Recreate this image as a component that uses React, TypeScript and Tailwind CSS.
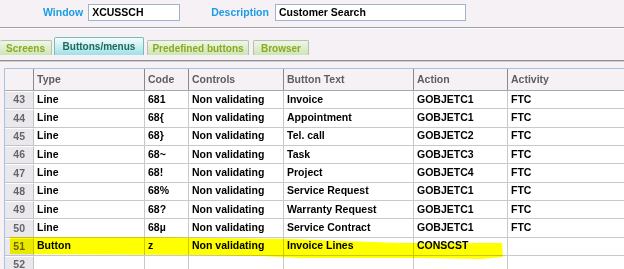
import React from 'react';

type Row = { n: number; type: string; code: string; controls: string; text: string; action: string; activity: string };

const rows: Row[] = [
  { n: 43, type: 'Line', code: '681', controls: 'Non validating', text: 'Invoice', action: 'GOBJETC1', activity: 'FTC' },
  { n: 44, type: 'Line', code: '68{', controls: 'Non validating', text: 'Appointment', action: 'GOBJETC1', activity: 'FTC' },
  { n: 45, type: 'Line', code: '68}', controls: 'Non validating', text: 'Tel. call', action: 'GOBJETC2', activity: 'FTC' },
  { n: 46, type: 'Line', code: '68~', controls: 'Non validating', text: 'Task', action: 'GOBJETC3', activity: 'FTC' },
  { n: 47, type: 'Line', code: '68!', controls: 'Non validating', text: 'Project', action: 'GOBJETC4', activity: 'FTC' },
  { n: 48, type: 'Line', code: '68%', controls: 'Non validating', text: 'Service Request', action: 'GOBJETC1', activity: 'FTC' },
  { n: 49, type: 'Line', code: '68?', controls: 'Non validating', text: 'Warranty Request', action: 'GOBJETC1', activity: 'FTC' },
  { n: 50, type: 'Line', code: '68µ', controls: 'Non validating', text: 'Service Contract', action: 'GOBJETC1', activity: 'FTC' },
  { n: 51, type: 'Button', code: 'z', controls: 'Non validating', text: 'Invoice Lines', action: 'CONSCST', activity: '' },
  { n: 52, type: '', code: '', controls: '', text: '', action: '', activity: '' },
];

const cols = 'grid grid-cols-[29px_111px_44px_95px_130px_94px_1fr]';

const Tab = ({ label, active, width }: { label: string; active?: boolean; width: string }) => (
  <div
    className={
      active
        ? `${width} h-[18px] flex items-center justify-center border border-b-0 border-[#79bcb0] rounded-t-[2px] bg-gradient-to-b from-[#f4fcfd] to-[#9fdfe9] text-[#1e6a5c]`
        : `${width} h-[15px] flex items-center justify-center border border-b-0 border-[#b9bdb5] rounded-t-[2px] bg-gradient-to-b from-[#eef7e6] to-[#cde5b5] text-[#8ea822]`
    }
  >
    {label}
  </div>
);

export default function App() {
  return (
    <div className="relative w-[624px] h-[269px] overflow-hidden bg-[#f5f1f5] font-['Liberation_Sans',Arial,sans-serif] text-[10.5px] font-bold text-black">
      {/* header fields */}
      <div className="flex items-center h-[27px] pb-[2px]">
        <span className="ml-[43px] text-[#1c9be4]">Window</span>
        <div className="ml-[5px] w-[92px] h-[17px] bg-white border border-[#9fb4cc] flex items-center pl-[3px]">XCUSSCH</div>
        <span className="ml-[31px] text-[#1c9be4]">Description</span>
        <div className="ml-[6px] w-[191px] h-[17px] bg-white border border-[#9fb4cc] flex items-center pl-[3px]">Customer Search</div>
      </div>
      <div className="h-[2px] border-t border-[#a3a0a3] border-b border-b-[#fbfafb]" />

      {/* tabs */}
      <div className="flex items-end h-[26px] gap-[2px] text-[10px]">
        <Tab label="Screens" width="w-[52px] border-l-0" />
        <Tab label="Buttons/menus" width="w-[90px]" active />
        <Tab label="Predefined buttons" width="w-[102px] ml-[1px]" />
        <Tab label="Browser" width="w-[56px] ml-[2px]" />
      </div>
      <div className="mt-[5px] h-[2px] border-t border-[#8e8c8e] border-b border-b-[#d0ced0]" />

      {/* table */}
      <div className="mt-[6px] ml-[4px] border-l border-t border-[#a9c3de]">
        <div className={`${cols} h-[22px] border-b border-[#a8a8a8] text-[#5e5e5e]`}>
          <div className="border-r border-[#8a8a8a]" />
          <div className="border-r border-[#8a8a8a] pl-[3px] flex items-center">Type</div>
          <div className="border-r border-[#8a8a8a] pl-[3px] flex items-center">Code</div>
          <div className="border-r border-[#8a8a8a] pl-[3px] flex items-center">Controls</div>
          <div className="border-r border-[#8a8a8a] pl-[3px] flex items-center">Button Text</div>
          <div className="border-r border-[#8a8a8a] pl-[3px] flex items-center">Action</div>
          <div className="pl-[3px] flex items-center">Activity</div>
        </div>
        {rows.map((r) => (
          <div key={r.n} className={`${cols} h-[18.33px] bg-white`}>
            <div className="bg-[#ebe8ed] border-r border-b border-[#c4c2c6] border-t border-t-white flex items-center justify-end pr-[8px] text-[#666]">
              {r.n}
            </div>
            <div className="border-r border-b border-[#c9c9c9] pl-[3px] flex items-center">{r.type}</div>
            <div className="border-r border-b border-[#c9c9c9] pl-[3px] flex items-center">{r.code}</div>
            <div className="border-r border-b border-[#c9c9c9] pl-[3px] flex items-center">{r.controls}</div>
            <div className="border-r border-b border-[#c9c9c9] pl-[3px] flex items-center">{r.text}</div>
            <div className="border-r border-b border-[#c9c9c9] pl-[3px] flex items-center">{r.action}</div>
            <div className="border-b border-[#c9c9c9] pl-[3px] flex items-center">{r.activity}</div>
          </div>
        ))}
      </div>

      {/* highlighter stroke over row 51 */}
      <svg className="absolute inset-0 pointer-events-none mix-blend-multiply" width="624" height="269">
        <polygon
          fill="#ffff00"
          points="10,237 150,237 290,239 400,243 502,243 503,257 480,259 420,258 350,258 300,258 260,256 190,255 10,254"
        />
      </svg>
    </div>
  );
}
